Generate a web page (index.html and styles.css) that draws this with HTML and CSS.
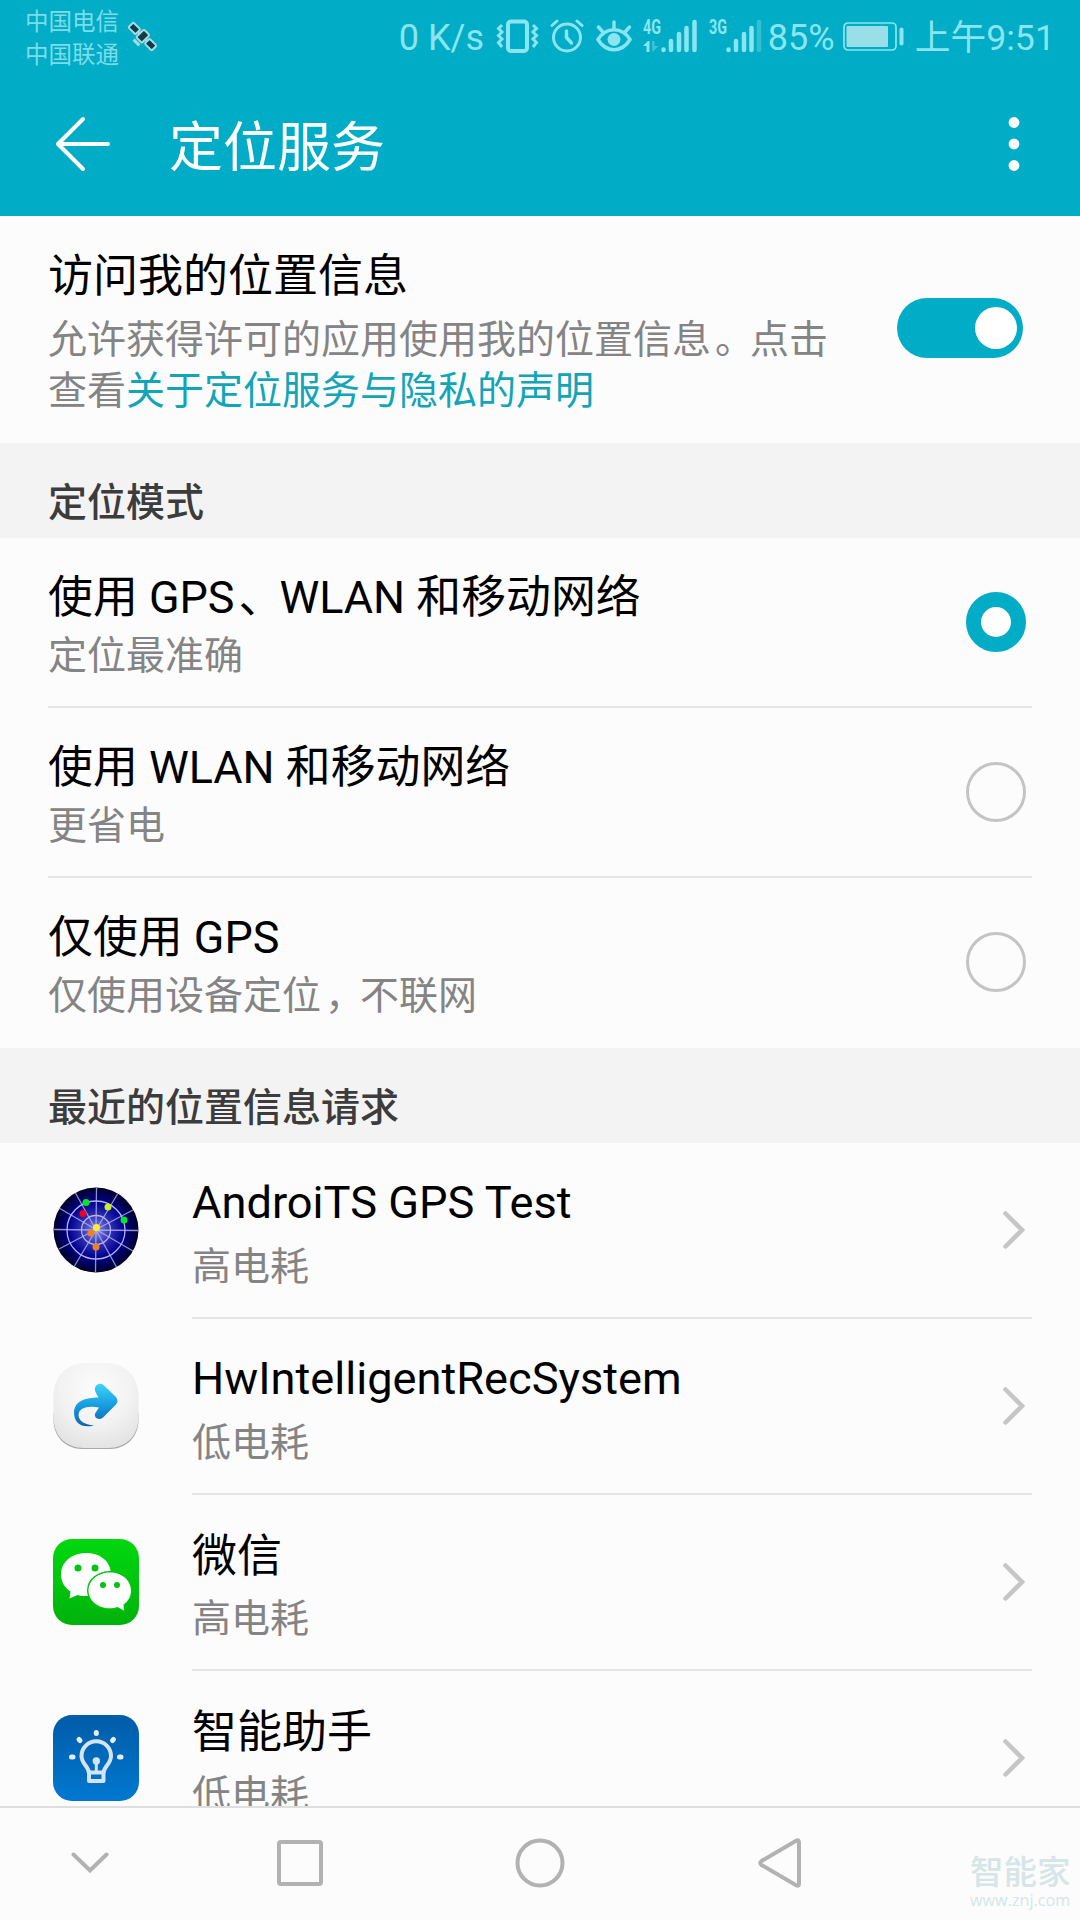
FILE: index.html
```html
<!DOCTYPE html>
<html lang="zh-CN">
<head>
  <meta charset="UTF-8">
  <title>定位服务</title>
  <link rel="stylesheet" href="styles.css">
</head>
<body>
  <div class="phone">
    <div class="status-bar">
      <div class="carriers">
        <div>中国电信</div>
        <div>中国联通</div>
      </div>
      <svg class="satellite" width="32" height="32" viewBox="0 0 32 32">
        <g transform="translate(15.5 15.5) rotate(45)" fill="#123c46" stroke="#a5dbe2" stroke-width="2">
          <path d="M-7 0H7" />
          <rect x="-16.5" y="-3.5" width="10" height="7" rx="1.5" />
          <rect x="6.5" y="-3.5" width="10" height="7" rx="1.5" />
          <rect x="-4" y="-6" width="8" height="11" rx="1.5" />
          <path d="M-4 8.500H4" stroke-width="3" />
        </g>
      </svg>

      <div class="status-right">
        <span class="speed">0 K/s</span>
        <svg class="vibrate" width="43" height="34" viewBox="0 0 43 34" fill="none" stroke="#8ae5f0">
          <rect x="12" y="2.500" width="19" height="29.500" rx="3" stroke-width="4" />
          <path d="M6 6L2.500 9.500L6 13L2.500 16.500L6 20L2.500 23.500L6 28M37 6L40.500 9.500L37 13L40.500 16.500L37 20L40.500 23.500L37 28" stroke-width="3" />
        </svg>
        <svg class="alarm" width="34" height="34" viewBox="0 0 34 34" fill="none" stroke="#8ae5f0" stroke-width="3" stroke-linecap="round">
          <circle cx="17" cy="18.500" r="13.500" />
          <path d="M2 6.500L7 2M32 6.500L27 2" />
          <path d="M16.500 12V18.500L21.500 24" stroke-width="3.500" />
        </svg>
        <svg class="eye" width="36" height="34" viewBox="0 0 36 34" fill="none" stroke="#8ae5f0" stroke-width="3.500" stroke-linecap="round">
          <path d="M2 20.500C10 7.500 26 7.500 34 20.500C26 34 10 34 2 20.500Z" />
          <path d="M18 9V3M6.500 12.500L2.500 8M29.500 12.500L33.500 8" />
          <circle cx="18" cy="20.500" r="6.500" fill="#8ae5f0" stroke="none" />
        </svg>
        <svg class="signal" width="54" height="34" viewBox="0 0 54 34">
          <text x="0" y="15" textLength="18" lengthAdjust="spacingAndGlyphs">4G</text>
          <path class="bars" d="M20.500 30.500V31M28 22V31M36 15V31M43.500 9V31M51.500 3V31" />
          <path d="M0 27L5 22H6.500V33H3.500V27Z" fill="#8ae5f0" />
          <path d="M9 22H11.500V27H15.500L9.500 33Z" fill="#42c4d6" />
        </svg>
        <svg class="signal signal-3g" width="54" height="34" viewBox="0 0 54 34">
          <text x="0" y="15" textLength="18" lengthAdjust="spacingAndGlyphs">3G</text>
          <path class="bars" d="M19.500 30.500V31M27 22V31M35 15V31M42.500 9V31" />
          <path class="bars bars-off" d="M50 3V31" />
        </svg>
        <span class="percent">85%</span>
        <svg class="battery" width="61" height="30" viewBox="0 0 61 30">
          <rect x="1" y="1" width="52" height="27" rx="4" fill="none" stroke="#8ae5f0" stroke-width="1.700" />
          <rect x="3.500" y="4" width="41.500" height="21" rx="1" fill="#99dfe8" />
          <rect x="56.500" y="5.500" width="4" height="18" rx="2" fill="#8ae5f0" />
        </svg>
        <span class="clock">上午9:51</span>
      </div>
    </div>

    <div class="header">
      <svg class="back" width="56" height="56" viewBox="0 0 56 56" fill="none" stroke="#fff" stroke-width="4" stroke-linecap="round" stroke-linejoin="round">
        <path d="M28 3L3 28L28 53M3 28H53" />
      </svg>
      <h1>定位服务</h1>
      <svg class="more" width="12" height="56" viewBox="0 0 12 56" fill="#fff">
        <circle cx="6" cy="6.500" r="5.400" />
        <circle cx="6" cy="28" r="5.400" />
        <circle cx="6" cy="49.500" r="5.400" />
      </svg>
    </div>

    <div class="content">
      <div class="access">
        <div class="access-text">
          <div class="title">访问我的位置信息</div>
          <p>允许获得许可的应用使用我的位置信息<span class="punct">。</span>点击查看<a>关于定位服务与隐私的声明</a></p>
        </div>
        <div class="switch"></div>
      </div>

      <h2>定位模式</h2>
      <div class="mode">
        <div>
          <div class="title">使用 GPS<span class="punct">、</span>WLAN 和移动网络</div>
          <div class="sub">定位最准确</div>
        </div>
        <div class="radio checked"></div>
      </div>
      <div class="mode">
        <div>
          <div class="title">使用 WLAN 和移动网络</div>
          <div class="sub">更省电</div>
        </div>
        <div class="radio"></div>
      </div>
      <div class="mode">
        <div>
          <div class="title">仅使用 GPS</div>
          <div class="sub">仅使用设备定位<span class="punct">，</span>不联网</div>
        </div>
        <div class="radio"></div>
      </div>

      <h2>最近的位置信息请求</h2>
      <div class="app">
        <svg class="icon" viewBox="0 0 86 86">
          <defs>
            <radialGradient id="radar">
              <stop offset="0" stop-color="#8c8ce8" />
              <stop offset="0.350" stop-color="#2f2fb0" />
              <stop offset="0.650" stop-color="#000090" />
              <stop offset="1" stop-color="#000028" />
            </radialGradient>
          </defs>
          <circle cx="43" cy="43" r="42.500" fill="url(#radar)" />
          <g fill="none" stroke="#b4b4f4" stroke-width="1.300">
            <circle cx="43" cy="43" r="14.500" />
            <circle cx="43" cy="43" r="29" />
            <path d="M1 42.500L85 43.500M43.500 1L42.500 85M22.500 6L63.500 80M64.500 7L21.500 79M6 21L80 64M6 62L80 23" stroke-opacity="0.800" />
          </g>
          <circle cx="33" cy="15.500" r="3.500" fill="#00e628" />
          <circle cx="55" cy="20" r="3.500" fill="#c8f020" />
          <circle cx="71" cy="33" r="3.500" fill="#00e628" />
          <circle cx="30" cy="26.500" r="3.500" fill="#f00020" />
          <circle cx="38" cy="46" r="3.500" fill="#f08020" />
          <circle cx="43.500" cy="40.500" r="3.500" fill="#fff020" />
          <circle cx="43" cy="60" r="3.500" fill="#f08020" />
        </svg>
        <div class="app-body">
          <div>
            <div class="title">AndroiTS GPS Test</div>
            <div class="sub">高电耗</div>
          </div>
          <svg class="chevron" viewBox="0 0 22 38"><path d="M2.500 2.500L19 19L2.500 35.500" /></svg>
        </div>
      </div>
      <div class="app">
        <svg class="icon" viewBox="0 0 86 86">
          <defs>
            <radialGradient id="pad" cx="0.500" cy="0.300" r="0.850">
              <stop offset="0" stop-color="#fcfcfc" />
              <stop offset="0.500" stop-color="#f2f2f2" />
              <stop offset="1" stop-color="#dcdcdc" />
            </radialGradient>
            <linearGradient id="share" x1="0" y1="0" x2="0" y2="1">
              <stop offset="0" stop-color="#3cd4f8" />
              <stop offset="0.500" stop-color="#189de0" />
              <stop offset="1" stop-color="#0f62b0" />
            </linearGradient>
          </defs>
          <path d="M0.500 50V57C0.500 74 13 86 29 86H57C73 86 85.500 74 85.500 57V50Z" fill="#a8a8a8" />
          <path d="M33 0H53C73 0 85.500 14 85.500 33V54C85.500 73 73 85 55 85H31C13 85 0.500 73 0.500 54V33C0.500 14 13 0 33 0Z" fill="url(#pad)" />
          <path d="M45.500 34.500L42.500 29C40 23 46 18.500 50.500 22L63 34C65 36.500 65 39.500 63 41.500L50 54.500C45 58.500 39.500 53.500 43 49L46 44.500C34 42.500 26 45 25.500 52C26 58 31 61.500 41 62.500C29 65.500 21 60.500 21 49C22 38 32 34.500 45.500 34.500Z" fill="url(#share)" />
        </svg>
        <div class="app-body">
          <div>
            <div class="title">HwIntelligentRecSystem</div>
            <div class="sub">低电耗</div>
          </div>
          <svg class="chevron" viewBox="0 0 22 38"><path d="M2.500 2.500L19 19L2.500 35.500" /></svg>
        </div>
      </div>
      <div class="app">
        <svg class="icon" viewBox="0 0 86 86">
          <defs>
            <linearGradient id="green" x1="0" y1="0" x2="0" y2="1">
              <stop offset="0" stop-color="#00d80e" />
              <stop offset="1" stop-color="#00b20c" />
            </linearGradient>
          </defs>
          <rect width="86" height="86" rx="19" fill="url(#green)" />
          <path d="M33 14C47 14 58 22.500 58 35C58 48 47 57 33 57C30 57 27 56.700 24.500 56L16.500 59.500L17.500 52.500C11.500 48.500 8 42.500 8 35.500C8 23 19 14 33 14Z" fill="#fff" />
          <path d="M57 33.500C68.500 33.500 78 41 78 51.500C78 57.500 75 62.500 70.500 65.500L71 71.500L64.500 68C62 69 59.500 69.300 57 69.300C45 69.300 35.500 61.500 35.500 51.500C35.500 41.500 45 33.500 57 33.500Z" fill="#fff" stroke="#00c40d" stroke-width="3" paint-order="stroke" />
          <g fill="#00c40d">
            <circle cx="25" cy="29" r="3.500" />
            <circle cx="42" cy="29" r="3.500" />
            <circle cx="50" cy="46" r="3" />
            <circle cx="64" cy="46" r="3" />
          </g>
        </svg>
        <div class="app-body">
          <div>
            <div class="title zh">微信</div>
            <div class="sub">高电耗</div>
          </div>
          <svg class="chevron" viewBox="0 0 22 38"><path d="M2.500 2.500L19 19L2.500 35.500" /></svg>
        </div>
      </div>
      <div class="app">
        <svg class="icon" viewBox="0 0 86 86">
          <defs>
            <linearGradient id="blue" x1="0" y1="0" x2="0" y2="1">
              <stop offset="0" stop-color="#005ca8" />
              <stop offset="1" stop-color="#0078d0" />
            </linearGradient>
          </defs>
          <rect width="86" height="86" rx="19" fill="url(#blue)" />
          <path d="M36 58C35.500 51 28.500 49 28.500 41A14.700 14.700 0 0 1 58 41C58 49 51 51 50.500 58" fill="none" stroke="#d5e4f3" stroke-width="4" />
          <path d="M43.300 57V47" stroke="#d5e4f3" stroke-width="3" />
          <circle cx="43.300" cy="46" r="3.700" fill="#d5e4f3" />
          <path d="M36 57.500H50.500V66H36Z" fill="none" stroke="#d5e4f3" stroke-width="4" stroke-linejoin="round" />
          <path d="M43.300 17.500V18.500M26 24.500L27 25.500M60.500 24.500L59.500 25.500M18.500 42H20M66.500 42H68" stroke="#e4eefa" stroke-width="5" stroke-linecap="round" />
        </svg>
        <div class="app-body">
          <div>
            <div class="title zh">智能助手</div>
            <div class="sub">低电耗</div>
          </div>
          <svg class="chevron" viewBox="0 0 22 38"><path d="M2.500 2.500L19 19L2.500 35.500" /></svg>
        </div>
      </div>
    </div>

    <div class="nav-bar">
      <svg width="38" height="22" viewBox="0 0 38 22"><path d="M2.500 2.500L19 18.500L35.500 2.500" /></svg>
      <svg class="square" width="46" height="46" viewBox="0 0 46 46"><rect x="2" y="2" width="42" height="42" rx="2" /></svg>
      <svg class="circle" width="50" height="50" viewBox="0 0 50 50"><circle cx="25" cy="25" r="22.500" /></svg>
      <svg class="triangle" width="44" height="50" viewBox="0 0 44 50"><path d="M38.500 2.500Q41 1.500 41 4.500V45.500Q41 48.500 38.500 47.500L3.500 27Q1 25 3.500 23Z" /></svg>
      <div class="watermark">
        <div class="brand">智能家</div>
        <div class="url">www.znj.com</div>
      </div>
    </div>
  </div>
</body>
</html>
```
FILE: styles.css
```css
* {
  box-sizing: border-box;
}

body {
  margin: 0;
  background-color: #fcfcfc;
  font-family: Roboto, "Noto Sans CJK SC", sans-serif;
  color: #000;
}

svg {
  display: block;
  flex: none;
}

.phone {
  display: flex;
  flex-direction: column;
  width: 1080px;
  height: 1920px;
  overflow: hidden;
}

.status-bar {
  display: flex;
  height: 72px;
  padding-left: 25px;
  padding-right: 25px;
  background-color: #00acc6;
  color: #8ae5f0;
}

.carriers {
  padding-top: 6px;
  font-size: 23.5px;
  line-height: 33px;
  color: #7cdde9;
}

.satellite {
  margin-left: 8px;
  margin-top: 21px;
}

.status-right {
  display: flex;
  align-items: flex-start;
  margin-left: auto;
  font-size: 36px;
  line-height: 42px;
  white-space: nowrap;
}

.status-right span {
  margin-top: 17px;
}

.speed {
  width: 97px;
}

.status-right svg {
  margin-top: 19px;
}

.vibrate {
  margin-right: 11px;
}

.alarm {
  margin-right: 12px;
}

.eye {
  margin-right: 11px;
}

.signal {
  margin-right: 12px;
  overflow: visible;
}

.signal text {
  font-size: 21px;
  font-weight: bold;
  font-family: Roboto, sans-serif;
  fill: #8ae5f0;
}

.signal .bars {
  stroke: #8ae5f0;
  stroke-width: 4.5;
  stroke-linecap: round;
}

.signal .bars-off {
  stroke: #35bfd2;
}

.signal-3g {
  margin-right: 5px;
}

.percent {
  width: 75px;
}

.status-right .battery {
  margin-top: 22px;
  margin-right: 11px;
}

.clock {
  font-size: 35.7px;
}

.header {
  display: flex;
  align-items: center;
  height: 144px;
  padding-left: 55px;
  padding-right: 60px;
  background-color: #00acc6;
}

.header h1 {
  margin: 9px 0 0 58px;
  font-size: 54px;
  line-height: 70px;
  font-weight: 400;
  color: #fff;
}

.more {
  margin-left: auto;
}

.content {
  flex: 1;
  min-height: 0;
  overflow: hidden;
}

.title {
  font-size: 45px;
  line-height: 54px;
}

.sub,
.access p {
  font-size: 39px;
  line-height: 51px;
  color: #848484;
}

.access {
  display: flex;
  justify-content: space-between;
  height: 227px;
  padding: 34px 57px 0 48px;
}

.access-text {
  width: 790px;
}

.access p {
  margin: 11px 0 0;
}

.access a {
  color: #12a5b8;
}

/* full-width punctuation sits a little off the preceding character */
.punct {
  margin-left: 4px;
  margin-right: -4px;
}

.switch {
  display: flex;
  justify-content: flex-end;
  width: 126px;
  height: 60px;
  margin-top: 48px;
  padding: 9px 6px;
  border-radius: 30px;
  background-color: #00acc6;
}

.switch::after {
  content: "";
  width: 42px;
  height: 42px;
  border-radius: 50%;
  background-color: #fff;
}

h2 {
  height: 95px;
  margin: 0;
  padding: 33px 48px 0;
  background-color: #f3f3f3;
  font-size: 39px;
  line-height: 54px;
  font-weight: 500;
  color: #3c3c3c;
}

.mode {
  display: flex;
  justify-content: space-between;
  height: 170px;
  margin: 0 48px;
  padding-top: 33px;
  padding-right: 6px;
  border-bottom: 2px solid #e5e5e5;
}

.mode:has(+ h2) {
  border-bottom: none;
}

.mode .title {
  font-size: 44.9px;
}

.mode .sub {
  margin-top: 6px;
}

.radio {
  width: 60px;
  height: 60px;
  margin-top: 21px;
  border: 3px solid #c4c4c4;
  border-radius: 50%;
}

.radio.checked {
  border: 15px solid #00acc6;
  background-color: #fff;
}

.app {
  display: flex;
  height: 176px;
  padding-left: 53px;
  padding-right: 48px;
}

.icon {
  width: 86px;
  height: 86px;
  margin-top: 44px;
}

.app-body {
  flex: 1;
  display: flex;
  justify-content: space-between;
  margin-left: 53px;
  padding-top: 33px;
  padding-right: 7px;
  border-bottom: 2px solid #e5e5e5;
}

.app .title {
  font-size: 45.2px;
}

.app .sub {
  margin-top: 12px;
}

.app .zh {
  padding-top: 2px;
  font-size: 45px;
}

.app .zh + .sub {
  margin-top: 10px;
}

.chevron {
  width: 22px;
  height: 38px;
  margin-top: 35px;
  fill: none;
  stroke: #c6c6c6;
  stroke-width: 4.5;
  stroke-linecap: round;
}

.nav-bar {
  position: relative;
  display: flex;
  align-items: center;
  height: 114px;
  padding-left: 71px;
  padding-bottom: 2px;
  border-top: 2px solid #dedede;
  background-color: #fcfcfc;
}

.nav-bar svg {
  fill: none;
  stroke: #b2b2b2;
  stroke-width: 4;
  stroke-linecap: round;
}

.nav-bar .square {
  margin-left: 168px;
}

.nav-bar .circle {
  margin-left: 192px;
}

.nav-bar .triangle {
  margin-left: 193px;
}

.watermark {
  position: absolute;
  right: 8px;
  bottom: 10px;
  width: 102px;
  color: #d5e6e8;
  white-space: nowrap;
}

.brand {
  font-size: 33.5px;
  line-height: 34px;
  font-weight: 500;
}

.url {
  font-family: "Open Sans", sans-serif;
  font-size: 16.2px;
  line-height: 20px;
}
```
